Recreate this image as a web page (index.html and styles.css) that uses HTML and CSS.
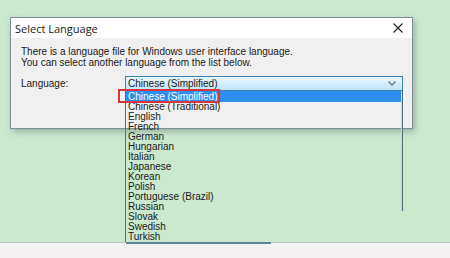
FILE: index.html
```html
<!DOCTYPE html>
<html>
<head>
<meta charset="utf-8">
<link rel="stylesheet" href="styles.css">
</head>
<body>
<div class="desktop">
  <div class="dialog">
    <div class="titlebar">
      <span class="title">Select Language</span>
      <svg class="close" width="10" height="10" viewBox="0 0 10 10"><path d="M0.5 0.5L9.5 9.5M9.5 0.5L0.5 9.5" stroke="#222" stroke-width="1.1"/></svg>
    </div>
    <div class="content">
      <p class="msg">There is a language file for Windows user interface language.<br>You can select another language from the list below.</p>
      <div class="row">
        <span class="label">Language:</span>
        <div class="combo">
          <span class="combo-text">Chinese (Simplified)</span>
          <svg class="chev" width="8" height="5" viewBox="0 0 8 5"><path d="M0.5 0.5L4 4L7.5 0.5" fill="none" stroke="#5a7a98" stroke-width="1.3"/></svg>
          <ul class="list">
            <li class="sel">Chinese (Simplified)</li>
            <li>Chinese (Traditional)</li>
            <li>English</li>
            <li>French</li>
            <li>German</li>
            <li>Hungarian</li>
            <li>Italian</li>
            <li>Japanese</li>
            <li>Korean</li>
            <li>Polish</li>
            <li>Portuguese (Brazil)</li>
            <li>Russian</li>
            <li>Slovak</li>
            <li>Swedish</li>
            <li>Turkish</li>
          </ul>
          <div class="mark"></div>
        </div>
      </div>
    </div>
  </div>
</div>
<div class="floor"></div>
</body>
</html>
```
FILE: styles.css
```css
html, body {
  margin: 0;
  padding: 0;
}
body {
  width: 450px;
  height: 258px;
  overflow: hidden;
  background: #f3f1f1;
  font-family: "Liberation Sans", Arial, sans-serif;
  font-size: 10px;
  color: #1a1a1a;
}
.desktop {
  height: 243px;
  background: #cce8cf;
  padding: 17px 0 0 10px;
  box-sizing: border-box;
  border-bottom: 1px solid #b8c4bb;
}
.dialog {
  width: 403px;
  height: 112px;
  box-sizing: border-box;
  border: 1px solid #7f8e9c;
  background: #f0f0f0;
  box-shadow: 2px 3px 6px rgba(60, 80, 70, 0.35);
  display: flex;
  flex-direction: column;
}
.titlebar {
  height: 20px;
  background: #ffffff;
  display: flex;
  align-items: center;
  justify-content: space-between;
  padding: 0 9px 0 4px;
}
.title {
  font-family: "Open Sans", sans-serif;
  font-size: 11px;
  color: #222;
  padding-top: 1px;
}
.content {
  padding: 8px 0 0 10px;
}
.msg {
  margin: 0;
  line-height: 11px;
  font-size: 10px;
}
.row {
  display: flex;
  align-items: center;
  margin-top: 8px;
}
.label {
  width: 104px;
}
.combo {
  position: relative;
  width: 278px;
  height: 15px;
  box-sizing: border-box;
  border: 1px solid #3c7fb1;
  background: linear-gradient(#eaf6fd, #c0e4fa);
  display: flex;
  align-items: center;
  justify-content: space-between;
  padding: 0 6px 0 2px;
}
.combo-text {
  line-height: 13px;
}
.list {
  position: absolute;
  left: -1px;
  top: 14px;
  width: 278px;
  margin: 0;
  padding: 0;
  list-style: none;
  border-left: 1px solid #4f6c7c;
  box-sizing: border-box;
}
.list::after {
  content: "";
  position: absolute;
  right: 0;
  top: 0;
  height: 120px;
  width: 1px;
  background: #4f6c7c;
  box-shadow: -1px 0 0 #a8e6ee;
}
.list::before {
  content: "";
  position: absolute;
  left: 0;
  bottom: -2px;
  width: 145px;
  height: 2px;
  background: #5d8694;
}
.list li {
  height: 10px;
  line-height: 10px;
  padding-left: 2px;
  white-space: nowrap;
}
.list li.sel {
  background: #2f8ff0;
  color: #fff;
  height: 11px;
  line-height: 11px;
}
.mark {
  position: absolute;
  left: -8px;
  top: 12px;
  width: 102px;
  height: 14px;
  box-sizing: border-box;
  border: 2px solid #d8343b;
}
.floor {
  height: 15px;
}
```
